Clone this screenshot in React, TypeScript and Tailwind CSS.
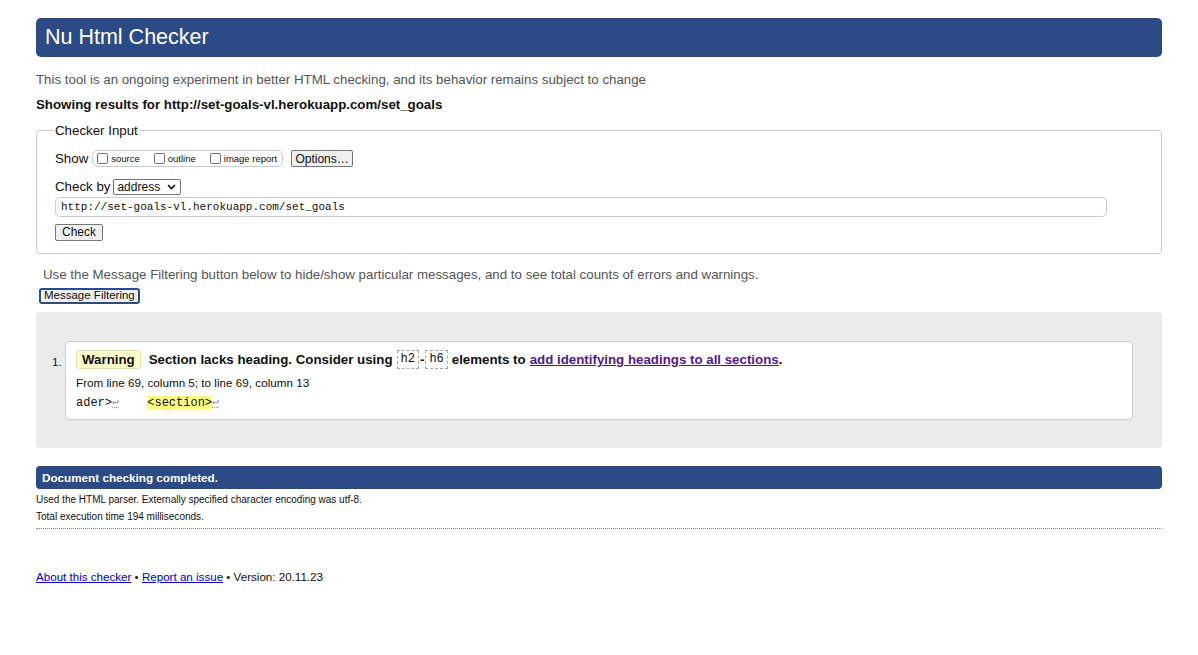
export default function App() {
  return (
    <div className="min-h-screen bg-white px-[36px] pt-[18px] text-[#111] [font-family:'Liberation_Sans',Arial,sans-serif]">
      {/* Header */}
      <header className="flex h-[39px] items-center rounded-[5px] bg-[#2c4a86] px-[9px]">
        <h1 className="text-[21.5px] leading-none text-white">Nu Html Checker</h1>
      </header>

      <p className="mt-[14px] text-[13.3px] leading-[17px] text-[#555]">
        This tool is an ongoing experiment in better HTML checking, and its behavior remains subject to change
      </p>
      <p className="mt-[8px] text-[13.3px] font-bold leading-[17px]">
        Showing results for http://set-goals-vl.herokuapp.com/set_goals
      </p>

      {/* Checker input */}
      <fieldset className="mt-[9px] rounded-[4px] border border-[#ccc] px-[18px] pb-[12px] pt-[10px]">
        <legend className="ml-[-2px] px-[2px] text-[13.3px] leading-[17px]">Checker Input</legend>
        <div className="flex items-center">
          <span className="text-[13.3px]">Show</span>
          <div className="ml-[4px] flex h-[17px] items-center gap-[14px] rounded-[6px] border border-[#ccc] pl-[4px] pr-[5px] text-[9.5px]">
            <label className="flex items-center gap-[3px]">
              <span className="inline-block h-[11px] w-[11px] rounded-[2px] border border-[#777] bg-white" />
              source
            </label>
            <label className="flex items-center gap-[3px]">
              <span className="inline-block h-[11px] w-[11px] rounded-[2px] border border-[#777] bg-white" />
              outline
            </label>
            <label className="flex items-center gap-[3px]">
              <span className="inline-block h-[11px] w-[11px] rounded-[2px] border border-[#777] bg-white" />
              image report
            </label>
          </div>
          <button className="ml-[8px] h-[17px] w-[62px] rounded-[2px] border border-[#777] bg-[#efefef] text-[12px] leading-none">
            Options…
          </button>
        </div>
        <div className="mt-[8px] flex items-center">
          <span className="text-[13.3px]">Check by</span>
          <div className="ml-[3px] flex h-[16px] w-[68px] items-center justify-between rounded-[2px] border border-[#777] bg-white pl-[3px] pr-[4px] text-[12px]">
            <span>address</span>
            <svg width="9" height="6" viewBox="0 0 9 6" fill="none">
              <path d="M1 1l3.5 3.5L8 1" stroke="#111" strokeWidth="1.6" />
            </svg>
          </div>
        </div>
        <div className="mt-[0px] flex h-[20px] w-[1052px] items-center rounded-[5px] border border-[#ccc] px-[5px] text-[11px] [font-family:'Liberation_Mono',monospace]">
          http://set-goals-vl.herokuapp.com/set_goals
        </div>
        <button className="mt-[7px] block h-[17px] rounded-[2px] border border-[#777] bg-[#efefef] px-[6px] text-[12px] leading-none">
          Check
        </button>
      </fieldset>

      <p className="mt-[12px] pl-[7px] text-[13.3px] leading-[17px] text-[#555]">
        Use the Message Filtering button below to hide/show particular messages, and to see total counts of errors and warnings.
      </p>
      <button className="ml-[3px] mt-[5px] block h-[16px] rounded-[3px] border-2 border-[#2c4a86] bg-[#efefef] px-[3px] text-[11.5px] leading-none">
        Message Filtering
      </button>

      {/* Results */}
      <div className="mt-[8px] rounded-[4px] bg-[#ebebeb] pb-[28px] pl-[16px] pr-[29px] pt-[29px]">
        <div className="flex">
          <span className="mt-[12px] w-[13px] text-[11.7px]">1.</span>
          <div className="flex-1 rounded-[4px] border border-[#ccc] bg-white px-[10px] pb-[8px] pt-[8px]">
            <div className="flex items-center text-[13.3px] font-bold">
              <span className="rounded-[4px] border border-[#e5dfa0] bg-[#ffffcc] px-[5px] leading-[17px]">Warning</span>
              <span className="ml-[8px]">Section lacks heading. Consider using</span>
              <code className="ml-[4px] border border-dashed border-[#aaa] px-[3px] text-[12px] font-normal leading-[17px] [font-family:'Liberation_Mono',monospace]">h2</code>
              <span className="mx-[1px]">-</span>
              <code className="border border-dashed border-[#aaa] px-[3px] text-[12px] font-normal leading-[17px] [font-family:'Liberation_Mono',monospace]">h6</code>
              <span className="ml-[4px]">elements to</span>
              <a href="#" className="ml-[4px] text-[#551a8b] underline">add identifying headings to all sections</a>
              <span>.</span>
            </div>
            <p className="mt-[5px] text-[11.7px] leading-[15px]">From line 69, column 5; to line 69, column 13</p>
            <p className="mt-[6px] text-[12px] leading-[15px] [font-family:'Liberation_Mono',monospace]">
              <span>ader&gt;<span className="text-[#999] underline decoration-dotted">↩</span></span>
              <span className="ml-[28px] bg-[#ffff80]">&lt;section&gt;</span>
              <span className="text-[#999] underline decoration-dotted">↩</span>
            </p>
          </div>
        </div>
      </div>

      {/* Summary */}
      <div className="mt-[18px] flex h-[23px] items-center rounded-[4px] bg-[#2c4a86] px-[6px] text-[11.7px] font-bold text-white">
        Document checking completed.
      </div>
      <p className="mt-[4px] text-[10px] leading-[13px]">Used the HTML parser. Externally specified character encoding was utf-8.</p>
      <p className="mt-[4px] text-[10px] leading-[13px]">Total execution time 194 milliseconds.</p>
      <hr className="mt-[5px] border-0 border-t border-dotted border-[#888]" />

      <p className="mt-[40px] text-[11.6px] leading-[15px]">
        <a href="#" className="text-[#00c] underline">About this checker</a>
        {' • '}
        <a href="#" className="text-[#00c] underline">Report an issue</a>
        {' • Version: 20.11.23'}
      </p>
    </div>
  )
}
